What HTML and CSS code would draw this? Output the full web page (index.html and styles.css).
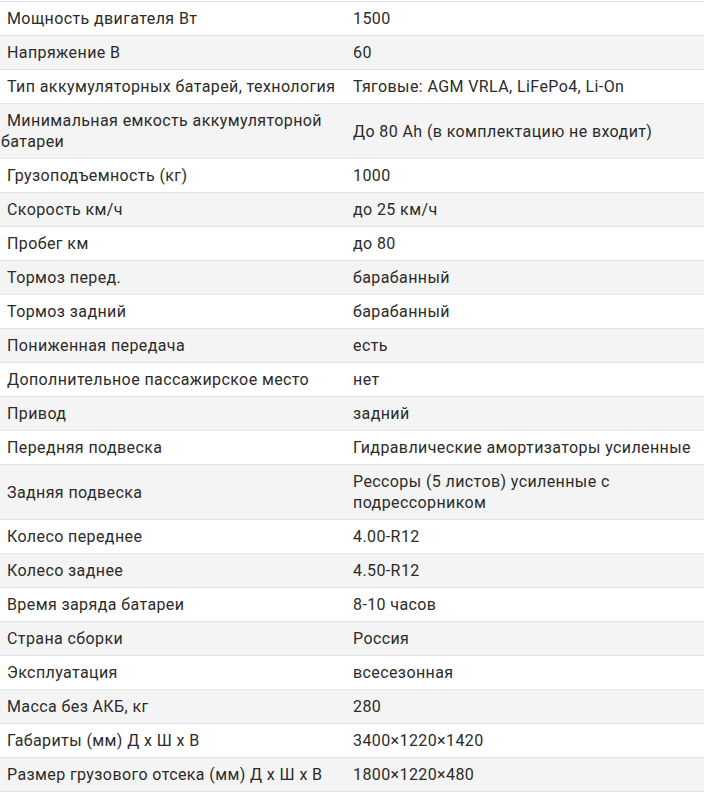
FILE: index.html
```html
<!DOCTYPE html>
<html lang="ru">
<head>
<meta charset="utf-8">
<link rel="stylesheet" href="styles.css">
</head>
<body>
<table class="specs">
<colgroup><col class="c-name"><col class="c-val"></colgroup>
<tbody>
<tr><td class="name">Мощность двигателя Вт</td><td class="val">1500</td></tr>
<tr><td class="name">Напряжение В</td><td class="val">60</td></tr>
<tr><td class="name">Тип аккумуляторных батарей, технология</td><td class="val">Тяговые: AGM VRLA, LiFePo4, Li-On</td></tr>
<tr><td class="name">Минимальная емкость аккумуляторной батареи</td><td class="val">До 80 Ah (в комплектацию не входит)</td></tr>
<tr><td class="name">Грузоподъемность (кг)</td><td class="val">1000</td></tr>
<tr><td class="name">Скорость км/ч</td><td class="val">до 25 км/ч</td></tr>
<tr><td class="name">Пробег км</td><td class="val">до 80</td></tr>
<tr><td class="name">Тормоз перед.</td><td class="val">барабанный</td></tr>
<tr><td class="name">Тормоз задний</td><td class="val">барабанный</td></tr>
<tr><td class="name">Пониженная передача</td><td class="val">есть</td></tr>
<tr><td class="name">Дополнительное пассажирское место</td><td class="val">нет</td></tr>
<tr><td class="name">Привод</td><td class="val">задний</td></tr>
<tr><td class="name">Передняя подвеска</td><td class="val">Гидравлические амортизаторы усиленные</td></tr>
<tr><td class="name">Задняя подвеска</td><td class="val">Рессоры (5 листов) усиленные с подрессорником</td></tr>
<tr><td class="name">Колесо переднее</td><td class="val">4.00-R12</td></tr>
<tr><td class="name">Колесо заднее</td><td class="val">4.50-R12</td></tr>
<tr><td class="name">Время заряда батареи</td><td class="val">8-10 часов</td></tr>
<tr><td class="name">Страна сборки</td><td class="val">Россия</td></tr>
<tr><td class="name">Эксплуатация</td><td class="val">всесезонная</td></tr>
<tr><td class="name">Масса без АКБ, кг</td><td class="val">280</td></tr>
<tr><td class="name">Габариты (мм) Д х Ш х В</td><td class="val">3400×1220×1420</td></tr>
<tr><td class="name">Размер грузового отсека (мм) Д х Ш х В</td><td class="val">1800×1220×480</td></tr>
</tbody>
</table>
</body>
</html>
```
FILE: styles.css
```css
html, body {
  margin: 0;
  padding: 0;
  background: #ffffff;
}
body {
  padding-top: 1px;
  font-family: Roboto, "Noto Sans", sans-serif;
  font-size: 16px;
  font-weight: 400;
  letter-spacing: 0.4px;
  line-height: 21px;
  color: #2b2b2b;
}
.specs {
  width: 704px;
  table-layout: fixed;
  border-collapse: separate;
  border-spacing: 0;
  border-top: 1px solid #e3e3e3;
}
.c-name { width: 346px; }
.c-val { width: 358px; }
.specs td {
  padding: 6px 0;
  border-bottom: 1px solid #e3e3e3;
  vertical-align: middle;
}
.specs tr:nth-child(even) td {
  background: #f4f4f4;
}
.specs td.name {
  padding-left: 1px;
  text-indent: 6px;
}
.specs td.val {
  padding-left: 7px;
}
```
